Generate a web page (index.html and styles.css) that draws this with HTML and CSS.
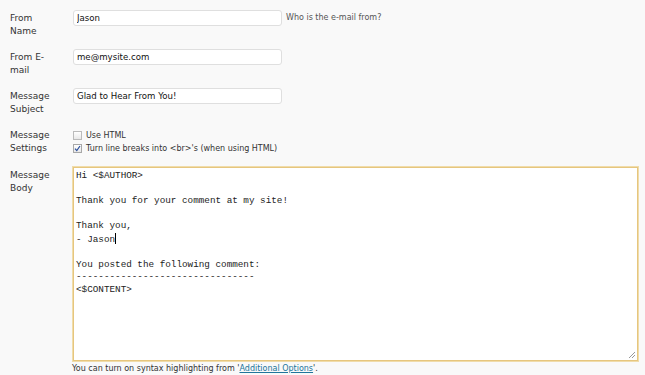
FILE: index.html
```html
<!DOCTYPE html>
<html lang="en">
  <head>
    <meta charset="UTF-8" />
    <title>Notification Settings</title>
    <link rel="stylesheet" href="styles.css">
  </head>
  <body>
    <div class="form-table">
      <div class="form-row">
        <div class="row-label">From Name</div>
        <div class="row-field">
          <input class="text-input" type="text" value="Jason">
          <span class="hint">Who is the e-mail from?</span>
        </div>
      </div>

      <div class="form-row">
        <div class="row-label">From E-mail</div>
        <div class="row-field">
          <input class="text-input" type="text" value="me@mysite.com">
        </div>
      </div>

      <div class="form-row">
        <div class="row-label">Message Subject</div>
        <div class="row-field">
          <input class="text-input" type="text" value="Glad to Hear From You!">
        </div>
      </div>

      <div class="form-row settings-row">
        <div class="row-label">Message Settings</div>
        <div class="row-field check-list">
          <label class="check-line">
            <span class="check-box"></span>
            Use HTML
          </label>
          <label class="check-line">
            <span class="check-box checked">
              <svg width="7" height="7" viewBox="0 0 7 7"><path d="M1 3.6 L2.8 5.6 L6 1" fill="none" stroke="#2a4f9c" stroke-width="1.2"/></svg>
            </span>
            Turn line breaks into &lt;br&gt;'s (when using HTML)
          </label>
        </div>
      </div>

      <div class="form-row body-row">
        <div class="row-label">Message Body</div>
        <div class="row-field">
          <div class="code-box"><div class="code-text">Hi &lt;$AUTHOR&gt;

Thank you for your comment at my site!

Thank you,
- Jason<span class="caret"></span>

You posted the following comment:
--------------------------------
&lt;$CONTENT&gt;</div>
            <svg class="grip" width="8" height="8" viewBox="0 0 8 8">
              <path d="M7 1 L1 7 M7 4 L4 7" stroke="#999" stroke-width="1"/>
            </svg>
          </div>
          <p class="note">You can turn on syntax highlighting from '<a href="#">Additional Options</a>'.</p>
        </div>
      </div>
    </div>
  </body>
</html>
```

FILE: styles.css
```css
* {
  margin: 0;
  padding: 0;
  box-sizing: border-box;
}

body {
  background: #f9f9f9;
  font-family: "DejaVu Sans", Verdana, sans-serif;
  color: #333;
}

.form-table {
  padding: 10px 0 0 10px;
}

.form-row {
  display: flex;
  min-height: 39px;
}

.settings-row {
  min-height: 40px;
}

.row-label {
  width: 50px;
  margin-right: 13px;
  padding-top: 1.5px;
  font-size: 9px;
  line-height: 13px;
  color: #333;
}

.row-field {
  display: flex;
  align-items: flex-start;
}

.text-input {
  width: 209px;
  height: 16px;
  padding: 0 3px;
  border: 1px solid #dfdfdf;
  border-radius: 3px;
  background: #fff;
  font-family: "DejaVu Sans", Verdana, sans-serif;
  font-size: 8.6px;
  color: #111;
  outline: none;
}

.hint {
  margin-left: 4px;
  font-size: 8px;
  line-height: 16px;
  color: #555;
}

.check-list {
  flex-direction: column;
  padding-top: 1.5px;
}

.check-line {
  display: flex;
  align-items: center;
  gap: 4px;
  height: 13px;
  font-size: 8px;
  color: #333;
}

.check-box {
  display: flex;
  align-items: center;
  justify-content: center;
  width: 9px;
  height: 9px;
  border: 1px solid #bbb;
  background: linear-gradient(to bottom, #fff 0%, #e8e8e8 100%);
}

.check-box.checked {
  border-color: #a8a8a8;
}

.body-row .row-field {
  flex-direction: column;
}

.code-box {
  position: relative;
  width: 565px;
  height: 194px;
  border: 1px solid #e6c67e;
  box-shadow: 0 0 0 1px #f0dcaa;
  background: #fff;
  padding: 2px 2px;
}

.code-text {
  font-family: "Liberation Mono", "Courier New", monospace;
  font-size: 9.3px;
  line-height: 12.5px;
  color: #222;
  white-space: pre;
}

.caret {
  display: inline-block;
  width: 1px;
  height: 11px;
  background: #000;
  vertical-align: -2px;
}

.grip {
  position: absolute;
  right: 1px;
  bottom: 1px;
}

.note {
  margin-top: 2px;
  margin-left: -1px;
  font-size: 8px;
  line-height: 11px;
  color: #333;
}

.note a {
  color: #21759b;
}
```
